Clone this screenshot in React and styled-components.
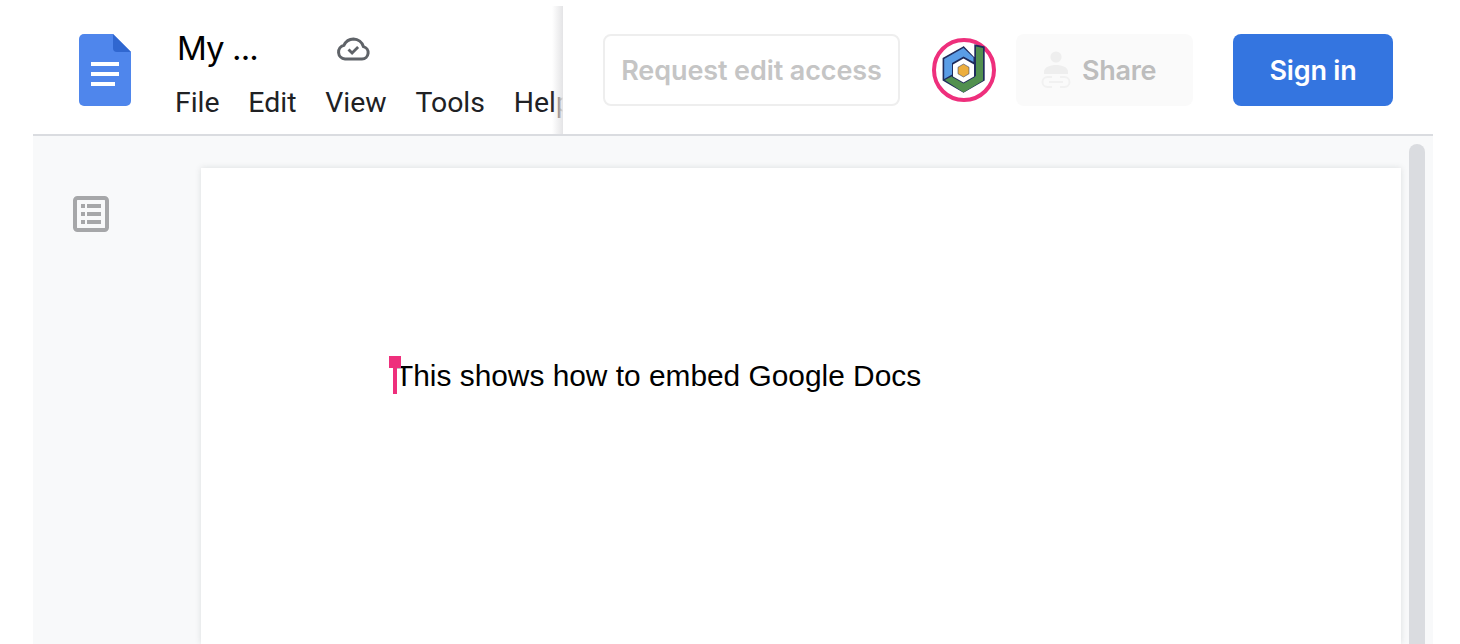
import React from 'react'
import styled, { createGlobalStyle } from 'styled-components'

const GlobalStyle = createGlobalStyle`
  html, body {
    margin: 0;
    padding: 0;
    height: 100%;
    overflow: hidden;
    background: #fff;
  }
`

const DocsLogo = () => (
  <svg width="52" height="72" viewBox="0 0 52 72">
    <path d="M5 0H34L52 18V67a5 5 0 0 1-5 5H5a5 5 0 0 1-5-5V5a5 5 0 0 1 5-5z" fill="#4f86ec" />
    <path d="M34 0L52 18H38a4 4 0 0 1-4-4z" fill="#3067d0" />
    <path d="M12 28H40V32H12zM12 38H40V42H12zM12 48H36V52H12z" fill="#fff" />
  </svg>
)

const CloudIcon = () => (
  <svg width="34" height="24" viewBox="0 0 34 24" fill="none">
    <path
      d="M9 22H26a6.3 6.3 0 0 0 1.4-12.4A10.5 10.5 0 0 0 17.5 2 10.8 10.8 0 0 0 8 8.2 7 7 0 0 0 9 22z"
      stroke="#5f6368"
      strokeWidth="3"
    />
    <path d="M12.5 12.5l3.6 3.6 6-6" stroke="#5f6368" strokeWidth="2.8" />
  </svg>
)

const Avatar = () => (
  <svg width="64" height="64" viewBox="0 0 64 64">
    <circle cx="32" cy="32" r="30" fill="#fff" stroke="#ee2f7c" strokeWidth="4" />
    <path d="M31.5 9L11.3 20.5V42L31.5 54L52 42V9L43 7V21z" fill="#1f2c5c" stroke="#1f2c5c" strokeWidth="1.4" />
    <path d="M31.5 10L12.2 21V41L20 36.5V25L31.5 18.5L41.5 24V19.5z" fill="#5a9de6" />
    <path d="M12.8 42L20.5 38L31.5 45L44 38V8.5L51 10V42.5L31.5 54.5z" fill="#51904f" />
    <path d="M31.5 19.5L43 26V39L31.5 45.5L20 39V26z" fill="#1f2c5c" />
    <path d="M31.5 20.6L42 26.6V38.4L31.5 44.4L21 38.4V26.6z" fill="#fff" />
    <path d="M31.5 26L37 29.2V35.8L31.5 39L26 35.8V29.2z" fill="#edae3e" stroke="#1f2c5c" strokeWidth="0.5" />
  </svg>
)

const ShareIcon = () => (
  <svg width="30" height="38" viewBox="0 0 30 38" fill="none">
    <circle cx="15" cy="6" r="5.6" fill="#eeeeee" />
    <path d="M3 21c0-5 6-7 12-7s12 2 12 7v2H3z" fill="#eeeeee" />
    <path
      d="M11 26H6.5a5 5 0 0 0 0 10H11M19 26h4.5a5 5 0 0 1 0 10H19M8 31h14"
      stroke="#f1f1f1"
      strokeWidth="2"
    />
  </svg>
)

const OutlineIcon = () => (
  <svg width="36" height="36" viewBox="0 0 36 36" fill="none">
    <rect x="2" y="2" width="32" height="32" rx="2.5" stroke="#a6a7a9" strokeWidth="4" />
    <path d="M8 8H12V12H8zM14 8H28V12H14zM8 16H12V20H8zM14 16H28V20H14zM8 24H12V28H8zM14 24H28V28H14z" fill="#a6a7a9" />
  </svg>
)

const App = () => (
  <Frame>
    <GlobalStyle />
    <Header>
      <Left>
        <LogoBox>
          <DocsLogo />
        </LogoBox>
        <TitleBlock>
          <TitleRow>
            <Title>My ...</Title>
            <CloudBox>
              <CloudIcon />
            </CloudBox>
          </TitleRow>
          <Menu>
            <MenuItem>File</MenuItem>
            <MenuItem>Edit</MenuItem>
            <MenuItem>View</MenuItem>
            <MenuItem>Tools</MenuItem>
            <MenuItem>Help</MenuItem>
          </Menu>
        </TitleBlock>
      </Left>
      <Right>
        <RequestButton>Request edit access</RequestButton>
        <AvatarBox>
          <Avatar />
        </AvatarBox>
        <ShareButton>
          <ShareIcon />
          <span>Share</span>
        </ShareButton>
        <SignInButton>Sign in</SignInButton>
      </Right>
    </Header>
    <Workspace>
      <Sidebar>
        <OutlineIcon />
      </Sidebar>
      <Page>
        <DocLine>
          <Cursor />
          This shows how to embed Google Docs
        </DocLine>
      </Page>
      <ScrollThumb />
    </Workspace>
  </Frame>
)

export default App

const Frame = styled.div`
  width: 1400px;
  height: 644px;
  margin-left: 33px;
  display: flex;
  flex-direction: column;
  overflow: hidden;
`

const Header = styled.div`
  height: 134px;
  flex: none;
  display: flex;
  border-bottom: 2px solid #dadce0;
  background: #fff;
`

const Left = styled.div`
  width: 530px;
  flex: none;
  display: flex;
  padding: 34px 0 0 46px;
  box-sizing: border-box;
  overflow: hidden;
`

const LogoBox = styled.div`
  width: 52px;
  height: 72px;
  flex: none;
`

const TitleBlock = styled.div`
  margin-left: 44px;
  display: flex;
  flex-direction: column;
`

const TitleRow = styled.div`
  display: flex;
  align-items: center;
  height: 28px;
`

const Title = styled.div`
  width: 160px;
  padding-left: 2px;
  box-sizing: border-box;
  font-family: Inter, sans-serif;
  font-size: 33px;
  letter-spacing: -0.9px;
  color: #000;
  white-space: nowrap;
`

const CloudBox = styled.div`
  display: flex;
  margin-left: 1px;
  margin-top: 2px;
`

const Menu = styled.div`
  display: flex;
  gap: 28.8px;
  margin-top: 25px;
`

const MenuItem = styled.div`
  font-family: Roboto, sans-serif;
  font-size: 28.4px;
  line-height: 32px;
  color: #202124;
  white-space: nowrap;
`

const Right = styled.div`
  position: relative;
  flex: 1;
  display: flex;
  align-items: flex-start;
  padding: 34px 0 0 40px;

  &::before {
    content: '';
    position: absolute;
    left: -11px;
    top: 6px;
    bottom: 0;
    width: 11px;
    background: linear-gradient(to right, rgba(226, 226, 228, 0), #e4e4e6);
  }
`

const RequestButton = styled.div`
  width: 297px;
  height: 72px;
  box-sizing: border-box;
  border: 2px solid #eeeeee;
  border-radius: 8px;
  display: flex;
  align-items: center;
  justify-content: center;
  font-family: Inter, sans-serif;
  font-weight: 600;
  font-size: 27px;
  letter-spacing: -0.1px;
  color: #c5c5c5;
  white-space: nowrap;
`

const AvatarBox = styled.div`
  width: 64px;
  height: 64px;
  margin: 4px 0 0 32px;
`

const ShareButton = styled.div`
  width: 177px;
  height: 72px;
  margin-left: 20px;
  box-sizing: border-box;
  padding-left: 25px;
  border-radius: 8px;
  background: #fafafa;
  display: flex;
  align-items: center;
  gap: 11px;
  font-family: Inter, sans-serif;
  font-weight: 600;
  font-size: 27px;
  letter-spacing: -0.3px;
  color: #bdbdbd;
`

const SignInButton = styled.div`
  width: 160px;
  height: 72px;
  margin-left: 40px;
  border-radius: 8px;
  background: #3475e0;
  display: flex;
  align-items: center;
  justify-content: center;
  font-family: Inter, sans-serif;
  font-weight: 600;
  font-size: 27px;
  letter-spacing: -0.2px;
  color: #fff;
`

const Workspace = styled.div`
  flex: 1;
  display: flex;
  background: #f8f9fa;
  overflow: hidden;
`

const Sidebar = styled.div`
  width: 168px;
  flex: none;
  box-sizing: border-box;
  padding: 60px 0 0 40px;
`

const Page = styled.div`
  width: 1200px;
  flex: none;
  margin-top: 32px;
  box-sizing: border-box;
  padding: 191px 0 0 196px;
  background: #fff;
  box-shadow: 0 0 6px rgba(60, 64, 67, 0.15);
`

const DocLine = styled.div`
  position: relative;
  font-family: 'Liberation Sans', Arial, sans-serif;
  font-size: 29.86px;
  line-height: 34px;
  margin-left: -2px;
  color: #000;
  white-space: nowrap;
`

const Cursor = styled.span`
  position: absolute;
  left: -2px;
  top: -3px;
  width: 4px;
  height: 38px;
  background: #ee2f7c;

  &::before {
    content: '';
    position: absolute;
    left: -4px;
    top: 0;
    width: 12px;
    height: 12px;
    background: #ee2f7c;
  }
`

const ScrollThumb = styled.div`
  width: 16px;
  flex: none;
  margin: 8px 0 0 8px;
  border-radius: 8px 8px 0 0;
  background: #dadce0;
`
